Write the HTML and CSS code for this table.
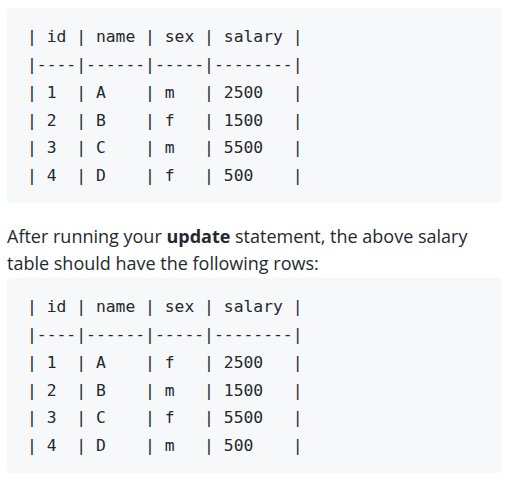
FILE: index.html
```html
<!DOCTYPE html>
<html>
<head>
<meta charset="utf-8">
<link rel="stylesheet" href="styles.css">
</head>
<body>
<div class="page">
<pre class="code">| id | name | sex | salary |
|----|------|-----|--------|
| 1  | A    | m   | 2500   |
| 2  | B    | f   | 1500   |
| 3  | C    | m   | 5500   |
| 4  | D    | f   | 500    |</pre>
<p class="text">After running your <strong>update</strong> statement, the above salary table should have the following rows:</p>
<pre class="code">| id | name | sex | salary |
|----|------|-----|--------|
| 1  | A    | f   | 2500   |
| 2  | B    | m   | 1500   |
| 3  | C    | f   | 5500   |
| 4  | D    | m   | 500    |</pre>
</div>
</body>
</html>
```

FILE: styles.css
```css
html, body {
  margin: 0;
  padding: 0;
  background: #ffffff;
}
.page {
  padding: 8px 6px 0 7px;
  color: #24292e;
}
.code {
  margin: 0;
  background: #f6f8fa;
  border-radius: 4px;
  padding: 15px 20px 13px 20px;
  font-family: "DejaVu Sans Mono", monospace;
  font-size: 16.35px;
  line-height: 27.85px;
  color: #24292e;
  white-space: pre;
}
.text {
  margin: 19.5px 0 0 0;
  font-family: "Open Sans", sans-serif;
  font-size: 18px;
  line-height: 27.7px;
  color: #24292e;
}
.text strong {
  font-weight: 700;
}
```
